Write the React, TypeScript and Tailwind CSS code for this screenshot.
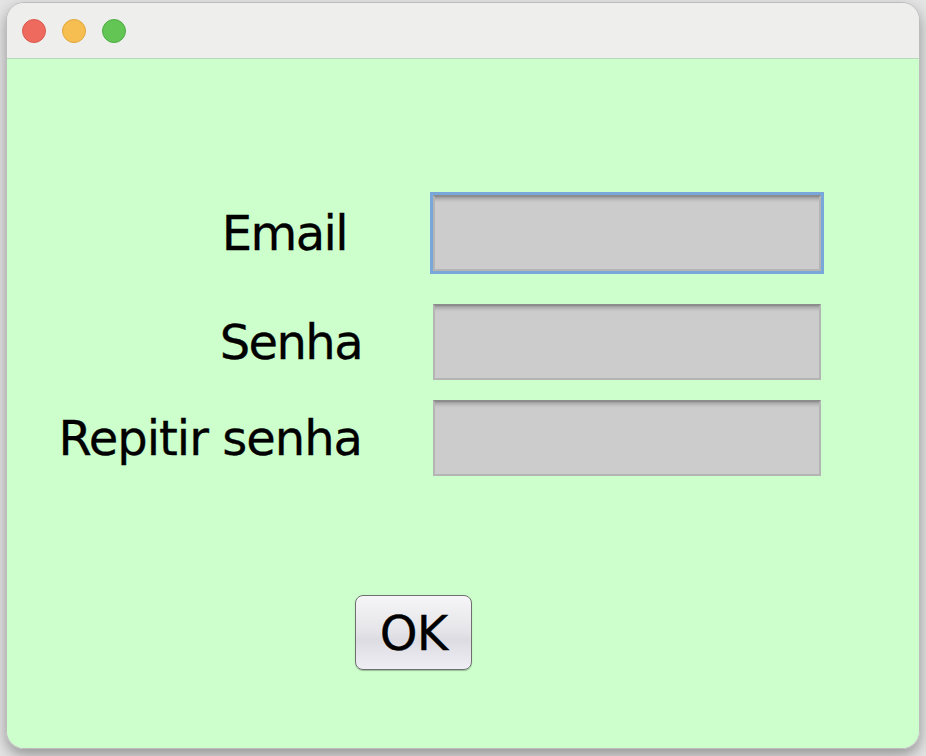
import React from 'react';

const labelFont = { fontFamily: '"DejaVu Sans", "Liberation Sans", sans-serif' };

const Field: React.FC<{ focused?: boolean }> = ({ focused }) => (
  <div
    className={
      'w-[388px] h-[76px] border-2 border-[#b4b4b4] border-t-[#8c8c8c] bg-[linear-gradient(to_bottom,#9c9c9c_0px,#b4b4b4_2px,#c4c4c4_4px,#cccccc_6px)] ' +
      (focused ? 'outline-[3px] outline-solid outline-[#7aa7da]' : '')
    }
  />
);

export default function App() {
  return (
    <div className="w-full h-screen bg-[#e4e4e4] pt-[2px] px-[6px] pb-[7px]" style={labelFont}>
      <div className="w-full h-full rounded-[18px] border border-[#bdbdbd] overflow-hidden flex flex-col shadow-[0_6px_14px_rgba(0,0,0,0.35)]">
        {/* barra de título */}
        <div className="h-[56px] shrink-0 bg-[#eeeeec] border-b border-[#b9d8b9] flex items-center pl-[15px] gap-[16px]">
          <span className="w-[24px] h-[24px] rounded-full bg-[#ee6a5f] border border-[#d95a50]" />
          <span className="w-[24px] h-[24px] rounded-full bg-[#f6be50] border border-[#dfa63c]" />
          <span className="w-[24px] h-[24px] rounded-full bg-[#62c554] border border-[#50ad44]" />
        </div>

        {/* conteúdo */}
        <div className="flex-1 bg-[#ccffcc] flex flex-col pt-[136px] text-black [-webkit-text-stroke:0.3px_black]">
          <div className="flex items-center">
            <div className="w-[355px] text-right pr-[15px] text-[48px] leading-none tracking-[-1.6px]">Email</div>
            <div className="ml-[71px]">
              <Field focused />
            </div>
          </div>
          <div className="flex items-center mt-[33px]">
            <div className="w-[355px] text-right text-[48px] leading-none tracking-[-1.6px]">Senha</div>
            <div className="ml-[71px]">
              <Field />
            </div>
          </div>
          <div className="flex items-center mt-[20px]">
            <div className="w-[355px] text-right text-[48px] leading-none tracking-[-1px]">Repitir senha</div>
            <div className="ml-[71px]">
              <Field />
            </div>
          </div>

          <div className="mt-[119px] ml-[348px]">
            <button className="w-[117px] h-[75px] rounded-[8px] border border-[#6f6f6f] bg-[linear-gradient(to_bottom,#f6f6f8_0%,#e6e6ea_45%,#dcdce2_60%,#eeeef4_100%)] shadow-[0_1px_1px_rgba(0,0,0,0.25)] flex items-center justify-center text-[48px] leading-none tracking-[-1px]">
              OK
            </button>
          </div>
        </div>
      </div>
    </div>
  );
}
